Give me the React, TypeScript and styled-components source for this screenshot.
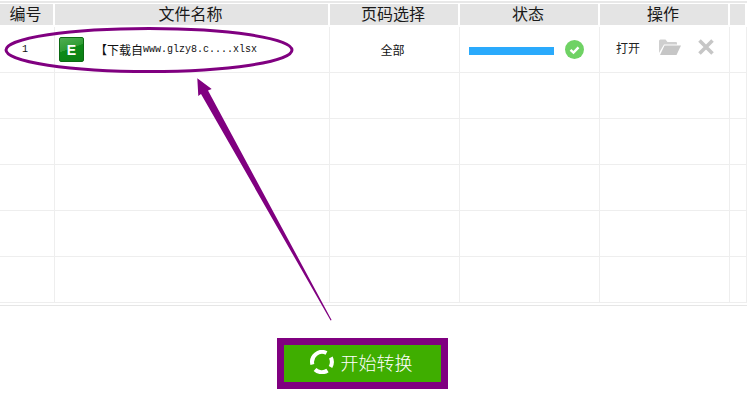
import React from "react";
import styled, { createGlobalStyle } from "styled-components";

const Global = createGlobalStyle`
  html, body { margin: 0; padding: 0; background: #fff; }
  body { font-family: "Liberation Sans", "Noto Sans CJK SC", sans-serif; }
`;

const COLS = "55px 275px 130px 140px 130px 17px";

const Page = styled.div`
  position: relative;
  width: 747px;
  height: 413px;
  overflow: hidden;
  display: flex;
  flex-direction: column;
  background: #fff;
`;

const TopLine = styled.div`
  height: 2px;
  margin-top: 1px;
  background: #e8e8e8;
  flex: none;
`;

const HeaderRow = styled.div`
  display: grid;
  grid-template-columns: ${COLS};
  height: 21px;
  margin-top: 1px;
  flex: none;
`;

const HeaderCell = styled.div`
  background: #e4e4e4;
  margin-right: 2px;
  padding-right: 2px;
  display: flex;
  align-items: center;
  justify-content: center;
  font-size: 16px;
  color: #1a1a1a;
  line-height: 21px;
`;

const Row = styled.div`
  display: grid;
  grid-template-columns: ${COLS};
  height: 46px;
  flex: none;
  box-sizing: border-box;
  border-bottom: 1px solid #eeeeee;
`;

const FirstRow = styled(Row)`
  margin-top: 2px;
`;

const Cell = styled.div<{ $center?: boolean }>`
  box-sizing: border-box;
  border-right: 1px solid #eeeeee;
  display: flex;
  align-items: center;
  justify-content: ${(p) => (p.$center ? "center" : "flex-start")};
  padding-right: ${(p) => (p.$center ? "4px" : "0")};
  font-size: 12px;
  color: #111;
  min-width: 0;
`;

const IndexText = styled.span`
  font-family: "Liberation Mono", monospace;
  font-size: 10px;
`;

const FileCell = styled(Cell)`
  padding-left: 4px;
`;

const FileBadge = styled.div`
  width: 25px;
  height: 25px;
  box-sizing: border-box;
  border-radius: 2px;
  border: 1px solid #0c6a12;
  background: linear-gradient(160deg, #4fae52 0%, #2f9c33 45%, #0d8a17 46%, #0b7f14 100%);
  color: #fff;
  display: flex;
  align-items: center;
  justify-content: center;
  font-size: 14px;
  font-weight: 700;
  flex: none;
`;

const FileName = styled.div`
  margin-left: 11px;
  display: flex;
  align-items: center;
  white-space: nowrap;
  font-size: 12px;
`;

const FileNameLatin = styled.span`
  font-family: "Liberation Mono", monospace;
  font-size: 10px;
`;

const StatusCell = styled(Cell)`
  padding-left: 9px;
`;

const ProgressBar = styled.div`
  width: 85px;
  height: 8px;
  margin-top: 3px;
  background: #2aaafc;
  flex: none;
`;

const DoneIcon = styled.svg`
  width: 19px;
  height: 19px;
  margin-left: 11px;
  flex: none;
`;

const ActionCell = styled(Cell)`
  padding: 0 0 5px 16px;
`;

const OpenLink = styled.span`
  font-size: 12px;
  color: #222;
  width: 43px;
  flex: none;
`;

const ActionIcon = styled.svg`
  flex: none;
`;

const CloseIcon = styled(ActionIcon)`
  margin-left: 17px;
`;

const Divider = styled.div`
  height: 1px;
  margin-top: 2px;
  background: #e6e6e6;
  flex: none;
`;

const Footer = styled.div`
  flex: 1;
  display: flex;
  justify-content: flex-start;
  padding: 32px 0 0 277px;
`;

const ConvertButton = styled.button`
  width: 171px;
  height: 51px;
  box-sizing: border-box;
  border: 7px solid #800080;
  background: #3fae00;
  color: #fff;
  font-family: "Liberation Sans", "Noto Sans CJK SC", sans-serif;
  font-size: 18px;
  font-weight: 300;
  display: flex;
  align-items: center;
  justify-content: center;
  gap: 7px;
  padding: 0 3px 3px 0;
`;

const Overlay = styled.svg`
  position: absolute;
  left: 0;
  top: 0;
  pointer-events: none;
`;

const headers = ["编号", "文件名称", "页码选择", "状态", "操作", ""];

function EmptyRow() {
  return (
    <Row>
      {headers.map((h, i) => (
        <Cell key={i} />
      ))}
    </Row>
  );
}

export default function App() {
  return (
    <Page>
      <Global />
      <TopLine />
      <HeaderRow>
        {headers.map((h, i) => (
          <HeaderCell key={i}>{h}</HeaderCell>
        ))}
      </HeaderRow>
      <FirstRow>
        <Cell $center>
          <IndexText>1</IndexText>
        </Cell>
        <FileCell>
          <FileBadge>E</FileBadge>
          <FileName>
            【下载自<FileNameLatin>www.glzy8.c....xlsx</FileNameLatin>
          </FileName>
        </FileCell>
        <Cell $center>全部</Cell>
        <StatusCell>
          <ProgressBar />
          <DoneIcon viewBox="0 0 19 19">
            <circle cx="9.5" cy="9.5" r="9.5" fill="#6fd264" />
            <path d="M5.5 9.8l3 2.8 5-5.2" fill="none" stroke="#fff" strokeWidth="2.4" />
          </DoneIcon>
        </StatusCell>
        <ActionCell>
          <OpenLink>打开</OpenLink>
          <ActionIcon width="22" height="16" viewBox="0 0 22 16">
            <path d="M0 14V2a1.5 1.5 0 0 1 1.5-1.5h5L8.500 3H17a1 1 0 0 1 1 1v1.500H5L0 14z" fill="#cfcfcf" />
            <path d="M5.500 6.500H22L17.500 16H1z" fill="#c6c6c6" />
          </ActionIcon>
          <CloseIcon width="16" height="16" viewBox="0 0 16 16">
            <path d="M1.500 1.500l13 13M14.500 1.500l-13 13" stroke="#c6c6c6" strokeWidth="3.6" fill="none" />
          </CloseIcon>
        </ActionCell>
        <Cell />
      </FirstRow>
      <EmptyRow />
      <EmptyRow />
      <EmptyRow />
      <EmptyRow />
      <EmptyRow />
      <Divider />
      <Footer>
        <ConvertButton>
          <svg width="24" height="24" viewBox="0 0 24 24">
            <path d="M2.400 14.500A10 10 0 0 1 16.500 3" fill="none" stroke="#fff" strokeWidth="4" />
            <path d="M20.800 7.500A10 10 0 0 1 20.500 17" fill="none" stroke="#fff" strokeWidth="4" />
            <path d="M5 19.500A10 10 0 0 0 17.500 20.500" fill="none" stroke="#fff" strokeWidth="4" />
          </svg>
          开始转换
        </ConvertButton>
      </Footer>
      <Overlay width="747" height="413" viewBox="0 0 747 413">
        <ellipse cx="149" cy="50" rx="143" ry="21.5" fill="none" stroke="#800080" strokeWidth="3" />
        <path d="M197.300 78.300L211.700 89L208 90.500L331.600 320L330.600 320.500L201 94L198.300 96Z" fill="#800080" />
      </Overlay>
    </Page>
  );
}
